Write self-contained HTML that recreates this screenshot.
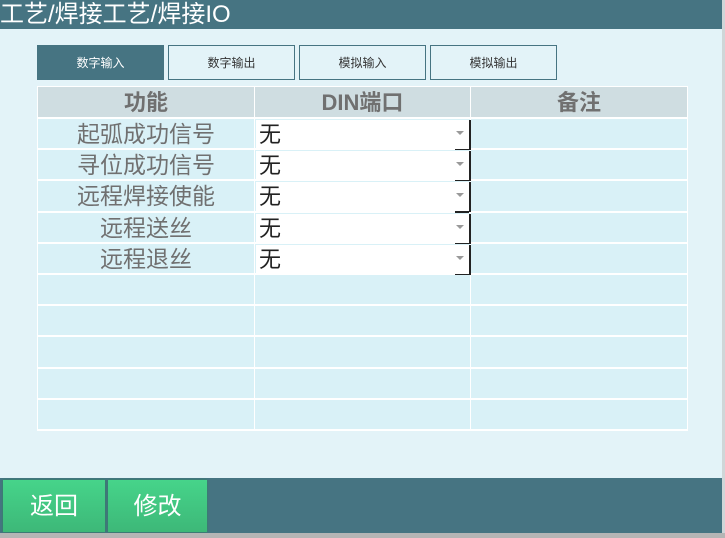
<!DOCTYPE html>
<html><head><meta charset="utf-8"><style>
*{margin:0;padding:0;box-sizing:border-box}
body{width:725px;height:538px;overflow:hidden;background:#e3f3f8;position:relative;font-family:"Liberation Sans","Noto Sans CJK SC",sans-serif}
.hdr{position:absolute;left:0;top:0;width:722px;height:29px;background:#467482;color:#fff;font-size:24px;line-height:29px;padding-left:0}
.tab{position:absolute;top:45px;height:35px;width:127px;border:1px solid #467482;font-size:12px;line-height:34px;text-align:center;color:#333}
.tab.a{background:#467482;color:#fff}
.grid{position:absolute;left:37px;top:86px;width:651px;height:345px;background:#fff;padding:1px;display:grid;grid-template-columns:216px 215px 216px;grid-template-rows:30px repeat(10,29.2px);column-gap:1px;row-gap:2px}
.grid div{background:#d9f1f7;font-size:23px;color:#707070;text-align:center;line-height:31px;position:relative}
.grid .h{background:#cfdde1;font-weight:bold;line-height:32px;font-size:22px}
.sel{position:absolute;left:1px;top:1px;right:1px;bottom:0;background:#fff !important;text-align:left !important;color:#222 !important;padding-left:3px;line-height:30px !important;border-right:2px solid #222;font-size:22px !important}
.sel:after{content:"";position:absolute;right:0;bottom:-1px;width:14px;height:2px;background:#222}
.sel:before{content:"";position:absolute;right:5px;top:11px;border-left:4px solid transparent;border-right:4px solid transparent;border-top:4px solid #999}
.bar{position:absolute;left:0;top:478px;width:722px;height:55px;background:#467482}
.btn{position:absolute;top:480px;height:52px;background:linear-gradient(#46d48a,#3db878);color:#fff;font-size:24px;text-align:center;line-height:54px;box-shadow:0 0 2px #2a8a5a}
.bot{position:absolute;left:0;top:533px;width:725px;height:5px;background:#b5b5b5}
.rs{position:absolute;left:722px;top:0;width:3px;height:538px;background:#cfd6d8}
</style></head><body>
<div class="hdr">工艺/焊接工艺/焊接IO</div>
<div class="rs"></div>
<div class="tab a" style="left:37px">数字输入</div>
<div class="tab" style="left:168px">数字输出</div>
<div class="tab" style="left:299px">模拟输入</div>
<div class="tab" style="left:430px">模拟输出</div>
<div class="grid">
<div class="h">功能</div><div class="h">DIN端口</div><div class="h">备注</div>
<div>起弧成功信号</div><div><div class="sel">无</div></div><div></div>
<div>寻位成功信号</div><div><div class="sel">无</div></div><div></div>
<div>远程焊接使能</div><div><div class="sel">无</div></div><div></div>
<div>远程送丝</div><div><div class="sel">无</div></div><div></div>
<div>远程退丝</div><div><div class="sel">无</div></div><div></div>
<div></div><div></div><div></div>
<div></div><div></div><div></div>
<div></div><div></div><div></div>
<div></div><div></div><div></div>
<div></div><div></div><div></div>
</div>
<div class="bar"></div>
<div class="btn" style="left:3px;width:102px">返回</div>
<div class="btn" style="left:108px;width:99px">修改</div>
<div class="bot"></div>
</body></html>
